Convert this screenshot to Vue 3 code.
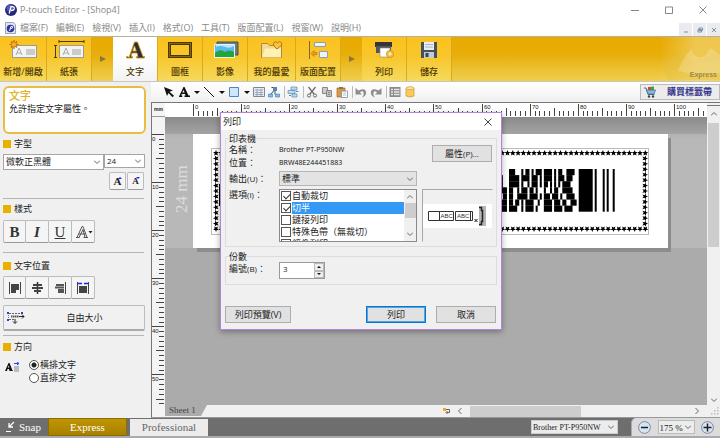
<script setup>
import { ref } from 'vue'

const menus = ['檔案(F)', '編輯(E)', '檢視(V)', '插入(I)', '格式(O)', '工具(T)', '版面配置(L)', '視窗(W)', '說明(H)']

const cutOptions = ref([
  { label: '自動裁切', on: true },
  { label: '切半', on: true, selected: true },
  { label: '鏈接列印', on: false },
  { label: '特殊色帶（無裁切）', on: false },
  { label: '鏡像列印', on: false }
])
const copies = ref(3)
const direction = ref('h')

const UNIT = 4.81
function ticks(count, from) {
  const list = []
  for (let i = from; i <= count; i++) {
    list.push({ pos: Math.round(i * UNIT), size: i % 10 === 0 ? 12 : i % 5 === 0 ? 8 : 5, text: i % 10 === 0 ? String(i) : '' })
  }
  return list
}
const hTicks = ticks(107, 0)
const vTicks = ticks(56, 0)

/* border stars, one unit star repeated around the label */
const stars = []
for (let i = 0; i <= 81; i++) {
  const x = 51 + i * 5.3
  stars.push({ x, y: 36, r: 0 }, { x, y: 112, r: 180 })
}
for (let i = 1; i < 14; i++) {
  const y = 36 + i * 5.43
  stars.push({ x: 51, y, r: 270 }, { x: 480, y, r: 90 })
}

/* PDF417 rows: tail of one codeword, two full codewords, then the stop pattern */
const stop = '111111101000101001'
const rows = [
  '0000' + '11100010110101110' + '11110101100111100',
  '1000' + '11111011110111010' + '11110101110111000',
  '1000' + '11111010010111010' + '11010101011110000',
  '1110' + '11001011101101000' + '10010110011111000',
  '0110' + '11001111101111010' + '11101110100111100',
  '1110' + '11011010111100100' + '11110111011001110',
  '1110' + '11110010111101000' + '11110111101111000'
]
function runs(row) {
  const out = []
  let start = -1
  for (let i = 0; i <= row.length; i++) {
    if (row[i] === '1' && start < 0) start = i
    if (row[i] !== '1' && start >= 0) {
      out.push({ start, n: i - start })
      start = -1
    }
  }
  return out
}
const bars = rows.flatMap((row, y) => runs(row).map((r) => ({ x: 335.8 + r.start * 2.05, y: 52 + y * 6.1, w: r.n * 2.05 })))
const stopBars = runs(stop).map((r) => ({ x: 413.7 + r.start * 2, w: r.n * 2 }))
</script>

<template>
  <div class="app">
    <header class="titlebar">
      <svg class="logo" viewBox="0 0 12 12"><circle cx="6" cy="6" r="6" fill="#26287c" /><circle cx="5" cy="4" r="3.5" fill="#5558b4" /><path d="M4.2 9.5 6 2.7h1.6q2.2.4 1.6 2.3Q8.600 6.700 6 6.500" fill="none" stroke="#fff" stroke-width="1.300" /></svg>
      <h1>P-touch Editor - [Shop4]</h1>
      <div class="winbtns">
        <button aria-label="minimize"><svg viewBox="0 0 8 8"><path d="M0 4.500h8" /></svg></button>
        <button aria-label="maximize"><svg viewBox="0 0 8 8"><path d="M.5 1h7v6.500h-7z" /></svg></button>
        <button aria-label="close"><svg viewBox="0 0 8 8"><path d="M.5.5l7 7M7.500.5l-7 7" /></svg></button>
      </div>
    </header>

    <nav class="menubar">
      <svg class="doc" viewBox="0 0 11 12"><path d="M.5.5h8l2 2v9H.5z" fill="#dfe5ef" stroke="#9aa5b8" /><circle cx="5.500" cy="6.500" r="3.800" fill="#30339a" /><path d="M4.500 9 6 4.300q2.500 0 1.500 1.700l-2 .7" fill="none" stroke="#fff" /></svg>
      <button v-for="m in menus" :key="m">{{ m }}</button>
      <div class="mdi">
        <button aria-label="minimize sheet"><svg viewBox="0 0 6 6"><path d="M1 5h4" /></svg></button>
        <button aria-label="restore sheet"><svg viewBox="0 0 6 6"><path d="M2 1h3.500v2.500H2zM1 2.500h3.500V5H1z" /></svg></button>
        <button aria-label="close sheet"><svg viewBox="0 0 6 6"><path d="M1 1l4 4M5 1L1 5" /></svg></button>
      </div>
    </nav>

    <div class="ribbon">
      <button class="tab">
        <svg viewBox="0 0 32 20"><rect x="5.500" y="5.500" width="24" height="12" fill="#f4f4f2" stroke="#9a9a92" /><path d="M19 9h9v6h-9z" fill="#c9cbcc" /><path d="M9 15l3-7 3 7M10 13h4" fill="none" stroke="#aaa" /><path d="M7 0v9M2.500 4.500h9M4 1.500l6 6M10 1.500l-6 6" stroke="#b46a12" stroke-width="1.200" /><circle cx="7" cy="4.500" r="2.600" fill="#ffae1c" stroke="#b46a12" stroke-width=".6" /></svg>
        新增/開啟
      </button>
      <button class="tab">
        <svg viewBox="0 0 32 20"><rect x="6.500" y="5.500" width="24" height="12" fill="#f4f4f2" stroke="#9a9a92" /><path d="M19 9h9v6h-9z" fill="#c9cbcc" /><path d="M10 15l3-7 3 7M11 13h4" fill="none" stroke="#aaa" /><path d="M6 1.500h25M6 0v3M31 0v3M2.500 5v13M1 5.500h3M1 17.500h3" stroke="#4b3b0c" fill="none" /></svg>
        紙張
      </button>
      <span class="sep"><svg viewBox="0 0 6 6"><path d="M0 0l6 3-6 3z" fill="#8a7440" /></svg></span>
      <button class="tab active">
        <svg viewBox="0 0 32 20"><path d="M10 17.500 15.500 2h3L24 16.500h1.500V18h-8v-1.500h1.500l-1-3.500h-5l-1 3.500h1.500V18h-6v-1.500H9zM13.700 11h3.600l-1.800-5z" fill="#2c2c3c" stroke="#d9a013" stroke-width=".9" fill-rule="evenodd" /></svg>
        文字
      </button>
      <button class="tab">
        <svg viewBox="0 0 32 20"><path d="M5.500 3.500h21v13h-21z" fill="none" stroke="#4a3608" stroke-width="3" /><path d="M5.500 3.500h21v13h-21z" fill="none" stroke="#c8960f" stroke-width="1" stroke-dasharray="1 1" /></svg>
        圖框
      </button>
      <button class="tab">
        <svg viewBox="0 0 32 20"><path d="M8 2h21v13H8z" fill="#707880" stroke="#42505c" /><path d="M5.500 4.500h20v13h-20z" fill="#59b9ea" stroke="#e8f2f5" /><path d="M6 17v-4q5-5 10-1 4-3 9 0v5z" fill="#23a33c" /><path d="M7 7q4-2 9 0t9-1v-1H7z" fill="#b8e6fa" /></svg>
        影像
      </button>
      <button class="tab wide">
        <svg viewBox="0 0 32 20"><path d="M5.500 17.500v-14h6l2 2h12v12z" fill="#f3d98e" stroke="#a98c3e" /><path d="M6 17.500 9 8.500h16v9z" fill="#fff0b4" /><path d="M21 9q-5-4-3-6.500Q20 .5 21.500 3 23.500.5 25.500 2.500 27 5 21 9z" fill="#ffc23b" stroke="#b07810" /></svg>
        我的最愛
      </button>
      <button class="tab">
        <svg viewBox="0 0 32 20"><path d="M7.500 1v18" stroke="#7b6a2a" /><path d="M12.500 2.500h11v4h-11zM17.500 11.500h8v6h-8z" fill="#eef3fa" stroke="#8e9db5" /><path d="M9 13.500 12 10.500v2h3v2h-3v2z" fill="#f19a14" stroke="#ad6608" stroke-width=".5" /></svg>
        版面配置
      </button>
      <span class="sep"><svg viewBox="0 0 6 6"><path d="M0 0l6 3-6 3z" fill="#8a7440" /></svg></span>
      <button class="tab">
        <svg viewBox="0 0 32 20"><path d="M7 2h17v5H7z" fill="#34343a" /><path d="M8 6h15v7H8z" fill="#54545c" /><path d="M12 8h10v9H12z" fill="#fff" stroke="#888" stroke-width=".6" /><circle cx="22" cy="14" r="3.600" fill="#f7bd3c" stroke="#b98416" stroke-width=".6" /><path d="M20.500 14h3M22 12.500v3" stroke="#fff" /></svg>
        列印
      </button>
      <button class="tab">
        <svg viewBox="0 0 32 20"><path d="M8 2h16v16H8z" fill="#46505c" /><path d="M11 2h10v8H11z" fill="#e9eef3" /><path d="M12 4.500h8M12 7h8" stroke="#a8b2bd" /><path d="M11 12h10v6H11z" fill="#c2cad2" /><path d="M12.500 13h3v4h-3z" fill="#39424d" /></svg>
        儲存
      </button>
      <div class="swoosh">
        <svg viewBox="0 0 60 43" preserveAspectRatio="none"><path d="M0 25q15-3 20-12 4 10 18 9 10-2 22-8v28H8z" fill="#e3bd3f" opacity=".35" /><path d="M18 33q8-18 14-21 3 12 14 6l4-7 10 6v18q-20 4-42-2z" fill="#fff" opacity=".2" /></svg>
        <span>Express</span>
      </div>
    </div>

    <div class="main">
      <aside class="side">
        <section class="info">
          <h2>文字</h2>
          <p>允許指定文字屬性。</p>
        </section>

        <section class="grp font">
          <h3>字型</h3>
          <div class="row">
            <span class="combo fam"><select aria-label="字型"><option>微軟正黑體</option></select><svg viewBox="0 0 6 4"><path d="M0 .5l3 3 3-3" /></svg></span>
            <span class="combo size"><select aria-label="字級"><option>24</option></select><svg viewBox="0 0 6 4"><path d="M0 .5l3 3 3-3" /></svg></span>
          </div>
          <div class="row step">
            <button class="sq small" aria-label="放大"><span class="a1">A</span><i class="up"></i></button>
            <button class="sq small" aria-label="縮小"><span class="a2">A</span><i class="dn"></i></button>
          </div>
        </section>

        <section class="grp style">
          <h3>樣式</h3>
          <div class="row">
            <button class="sq"><b>B</b></button>
            <button class="sq"><b class="it">I</b></button>
            <button class="sq"><span class="un">U</span></button>
            <button class="sq" aria-label="外框"><svg viewBox="0 0 20 18"><path d="M4 14.500 9 3.500h1l4 11M6 11h6.500M3 14.500h3.500M10.500 14.500H15M6 14.500l4-8 2 8" fill="none" stroke="#555" /><path d="M15.500 8h4l-2 2.500z" fill="#222" /></svg></button>
          </div>
        </section>

        <section class="grp pos">
          <h3>文字位置</h3>
          <div class="row">
            <button class="sq" aria-label="靠左"><svg viewBox="0 0 20 18"><path d="M4.500 3v12M15.500 3v12" stroke="#444" /><path d="M6 5h8v6h-3v3H6z" fill="#444" /></svg></button>
            <button class="sq" aria-label="置中"><svg viewBox="0 0 20 18"><path d="M10.500 3v12" stroke="#333" stroke-width="1.500" /><path d="M6 5h9v2H6zM5 8h11v2H5zM7 11h7v2H7z" fill="#444" /></svg></button>
            <button class="sq" aria-label="靠右"><svg viewBox="0 0 20 18"><path d="M15.500 3v12" stroke="#444" /><path d="M6 5h8v2H6zM5 7.500h9v2H5zM8 10h6v4H8z" fill="#555" /></svg></button>
            <button class="sq" aria-label="左右對齊"><svg viewBox="0 0 20 18"><path d="M4.500 3v12M15.500 3v12" stroke="#444" /><path d="M6 7h8v7H6z" fill="#444" /><path d="M5 4.500h4M11 4.500h4" stroke="#22f" stroke-width="1.500" /></svg></button>
          </div>
          <button class="free">
            <svg viewBox="0 0 18 14"><path d="M2 2.500h13M2 8.500h5" fill="none" stroke="#666" stroke-dasharray="2 1" /><path d="M1.500 2v7" stroke="#777" stroke-dasharray="1 1" /><path d="M4 5.500h8" stroke="#555" stroke-width="2" stroke-dasharray="1.500 .5" /><path d="M12 5.500h5M15 3.500l2 2-2 2M8 8v4M6 10.500l2 2 2-2" fill="none" stroke="#222" /><path d="M0 1h2v2H0zM0 8h2v2H0zM14 1h2v2h-2z" fill="#2442d8" /></svg>
            <span>自由大小</span>
          </button>
        </section>

        <section class="grp dir">
          <h3>方向</h3>
          <div class="dirrow">
            <svg viewBox="0 0 15 10"><path d="M0 9 3.500 1h1L7.500 8.500H8V9H4.500L4 7H2.500L2 9zM2.800 5.500h1.600L3.700 3.500z" fill="#111" fill-rule="evenodd" /><path d="M9 1.500h5M12 0l2 1.500L12 3" stroke="#24f" fill="none" /><path d="M9 5h5M9 7h5M9 9h5" stroke="#888" /></svg>
            <div>
              <label><input v-model="direction" type="radio" name="dir" value="h" />橫排文字</label>
              <label><input v-model="direction" type="radio" name="dir" value="v" />直排文字</label>
            </div>
          </div>
        </section>
      </aside>

      <div class="work">
        <div class="tools">
          <button aria-label="選取"><svg viewBox="0 0 12 12"><path d="M1 1l9 3.500-3.500 1.300 4.500 4-1.500 1.500-4-4.300L4 10z" fill="#111" /></svg></button>
          <button aria-label="文字"><svg viewBox="0 0 12 12"><path d="M1 10.500 5.500 1h1L10.500 9.500H12V11H6.500V9.500h1L7 8H3.800l-.5 1.500h1V11H1zM4.300 6.500h2.300L5.500 4z" fill="#111" fill-rule="evenodd" /></svg></button>
          <i class="dd"></i>
          <button aria-label="線條"><svg viewBox="0 0 12 12"><path d="M1 1l10 10" stroke="#111" /></svg></button>
          <i class="dd"></i>
          <button aria-label="形狀"><svg viewBox="0 0 12 12"><path d="M1.500 1.500h9v9h-9z" fill="#cfe6fb" stroke="#4b86bd" /></svg></button>
          <i class="dd"></i>
          <button aria-label="表格"><svg viewBox="0 0 12 12"><path d="M.5 1.500h11v9H.5z" fill="#e3e9f2" stroke="#7c8798" /><path d="M2 4h8M2 6.500h8M2 8.500h8M4 3v7M8 3v7" stroke="#8794a8" stroke-width=".7" /></svg></button>
          <button aria-label="排列文字"><svg viewBox="0 0 12 12"><path d="M3.500 1.500h5M6 1v4M6 4.500 3 8M7 4.500v4" stroke="#3a4a66" fill="none" /><path d="M5 1h4v4H5z" fill="#5c83ae" /><path d="M.5 8h4v3h-4zM7.500 8h4v3h-4z" fill="#7fbdf0" stroke="#3c78ac" stroke-width=".6" /></svg></button>
          <i class="vr"></i>
          <button aria-label="資料庫"><svg viewBox="0 0 12 12"><path d="M4 1h6v3H4zM1 4.500h7v3H1zM5 8h5v3H5z" fill="#bcdcf5" stroke="#5d87ae" stroke-width=".7" /><path d="M9 5.500h2.500M2 9.500h2" stroke="#5d87ae" /></svg></button>
          <i class="vr"></i>
          <button aria-label="剪下"><svg viewBox="0 0 12 12"><path d="M2.500 1l5.500 7M9.500 1 4 8" stroke="#6c6c6c" stroke-width="1.300" /><circle cx="3" cy="9.500" r="1.600" fill="none" stroke="#6c6c6c" /><circle cx="9" cy="9.500" r="1.600" fill="none" stroke="#6c6c6c" /></svg></button>
          <button aria-label="複製"><svg viewBox="0 0 12 12"><path d="M1.500 1.500h5v6h-5z" fill="#ccc" stroke="#888" /><path d="M5.500 4.500h5v6h-5z" fill="#c4c4c4" stroke="#888" /><path d="M7 6.500h2M7 8.500h2" stroke="#888" /></svg></button>
          <button aria-label="貼上"><svg viewBox="0 0 12 12"><path d="M1 2h8v9H1z" fill="#dc9a3e" stroke="#94601a" stroke-width=".6" /><path d="M3 1h4v2H3z" fill="#777" /><path d="M5.500 5h6v6.500h-6z" fill="#fff" stroke="#6d7f98" stroke-width=".7" /><path d="M7 7h3M7 9h3" stroke="#7fa3cc" stroke-width=".7" /></svg></button>
          <i class="vr"></i>
          <button aria-label="復原"><svg viewBox="0 0 12 12"><path d="M.5 2v6.500H7L5 6.500q2.500-2.500 3.500 0T7 11.500q5-2 4-6T3.500 4.500z" fill="#8d8d8d" /></svg></button>
          <button aria-label="重做"><svg viewBox="0 0 12 12"><path d="M11.500 2v6.500H5l2-2q-2.500-2.500-3.500 0T5 11.500q-5-2-4-6t7.500-1z" fill="#8d8d8d" /></svg></button>
          <i class="vr"></i>
          <button aria-label="屬性"><svg viewBox="0 0 12 12"><path d="M.5 1h11v10H.5z" fill="#8a8a8a" /><path d="M2 3.500h2M5 3.500h5.500M2 6h2M5 6h5.500M2 8.500h2M5 8.500h5.500" stroke="#e4e4e4" stroke-width="1.300" /></svg></button>
          <button aria-label="連接"><svg viewBox="0 0 12 12"><path d="M2 2v8q4 2 8 0V2z" fill="#fbc95c" stroke="#c18a1c" stroke-width=".6" /><ellipse cx="6" cy="2.200" rx="4" ry="1.500" fill="#ffe8a8" stroke="#c18a1c" stroke-width=".6" /></svg></button>
          <button class="buy">
            <svg viewBox="0 0 12 12"><path d="M4 1h3v3H4z" fill="#e33c2c" /><path d="M7 .5h3V4H7z" fill="#3bab3b" /><path d="M0 2h2l2 6.500h6.500" fill="none" stroke="#55687c" /><path d="M2.500 4h9L10 8H4z" fill="#86b8dd" stroke="#3f6f98" stroke-width=".7" /><circle cx="5" cy="10.500" r="1.200" fill="#444" /><circle cx="9" cy="10.500" r="1.200" fill="#444" /></svg>
            購買標籤帶
          </button>
        </div>

        <div class="stage">
          <div class="corner">mm</div>
          <div class="hruler">
            <svg>
              <g v-for="t in hTicks" :key="t.pos">
                <rect :x="t.pos + 28" :y="13 - t.size" width="1" :height="t.size" />
                <text v-if="t.text" :x="t.pos + 30" y="6">{{ t.text }}</text>
              </g>
            </svg>
          </div>
          <div class="vruler">
            <svg>
              <g v-for="t in vTicks" :key="t.pos">
                <rect :x="12 - t.size" :y="t.pos + 17" :width="t.size" height="1" />
                <text v-if="t.text" x="0" :y="t.pos + 24">{{ t.text }}</text>
              </g>
            </svg>
          </div>
          <div class="canvas">
            <svg>
              <defs>
                <polygon id="star" points="0,-3 .8,-1 2.900,-.9 1.300,.5 1.900,2.600 0,1.400 -1.900,2.600 -1.300,.5 -2.900,-.9 -.8,-1" />
              </defs>
              <rect x="0" y="17" width="100%" height="114" fill="#fff" opacity=".16" />
              <rect x="32" y="21" width="474" height="114" fill="#8d8d8d" />
              <rect x="28" y="17" width="475" height="114" fill="#fff" />
              <rect x="46.500" y="31.500" width="437" height="86" fill="none" stroke="#bbb" />
              <use v-for="(s, i) in stars" :key="i" href="#star" :transform="`translate(${s.x} ${s.y}) rotate(${s.r})`" />
              <rect v-for="(b, i) in bars" :key="'b' + i" :x="b.x" :y="b.y" :width="b.w" height="6.200" />
              <rect v-for="(b, i) in stopBars" :key="'s' + i" :x="b.x" y="52" :width="b.w" height="42.700" />
              <rect x="54" y="67" width="8" height="22" />
              <text class="tape" transform="translate(22 96) rotate(-90)">24 mm</text>
            </svg>
          </div>
          <div class="vscroll"><svg viewBox="0 0 6 4"><path d="M0 3.500l3-3 3 3" /></svg><i></i><svg viewBox="0 0 6 4"><path d="M0 .5l3 3 3-3" /></svg></div>
          <div class="sheetrow">
            <button class="sheet">Sheet 1</button>
            <div class="hscroll">
              <svg class="mark" viewBox="0 0 7 6"><path d="M2.500 1.500h4v3h-3M4.500 3l-1.500 1.500L4.500 6" fill="none" stroke="#888" /><path class="dot" d="M0 0h3v3H0z" /></svg>
              <svg viewBox="0 0 4 6"><path d="M3.500 0l-3 3 3 3" /></svg><i></i><b></b><svg viewBox="0 0 4 6"><path d="M.5 0l3 3-3 3" /></svg>
            </div>
          </div>
          <div class="grip"><svg viewBox="0 0 8 8"><path d="M6 0h1.500v1.500H6zM6 3h1.500v1.500H6zM3 3h1.500v1.500H3zM6 6h1.500v1.500H6zM3 6h1.500v1.500H3zM0 6h1.500v1.500H0z" /></svg></div>
        </div>
      </div>
    </div>

    <footer class="status">
      <button class="snap"><svg viewBox="0 0 9 12"><path d="M8 1 3.500 5.500M3 2v4h4" fill="none" stroke="#fff" stroke-width="1.300" /><path d="M0 10.500h5" stroke="#fff" /></svg>Snap</button>
      <button class="express">Express</button>
      <button class="pro">Professional</button>
      <span class="combo dev"><select aria-label="印表機"><option>Brother PT-P950NW</option></select><svg viewBox="0 0 6 4"><path d="M0 .5l3 3 3-3" /></svg></span>
      <div class="zoom">
        <button aria-label="縮小顯示"><svg viewBox="0 0 13 13"><circle cx="6.500" cy="6.500" r="5.900" fill="#d6e4f2" stroke="#7b8ba0" /><path d="M3 6.500h7" stroke="#222" stroke-width="1.500" /></svg></button>
        <span class="combo pct"><select aria-label="顯示比例"><option>175 %</option></select><svg viewBox="0 0 6 4"><path d="M0 .5l3 3 3-3" /></svg></span>
        <button aria-label="放大顯示"><svg viewBox="0 0 13 13"><circle cx="6.500" cy="6.500" r="5.900" fill="#d6e4f2" stroke="#7b8ba0" /><path d="M2.500 6.500h8M6.500 2.500v8" stroke="#222" stroke-width="1.500" /></svg></button>
      </div>
    </footer>

    <div class="dialog" role="dialog" aria-label="列印">
      <div class="dtitle">列印<button aria-label="close dialog"><svg viewBox="0 0 8 8"><path d="M.5.5l7 7M7.500.5l-7 7" /></svg></button></div>
      <div class="dbody">
        <fieldset class="printer">
          <legend>印表機</legend>
          <div class="facts">
            <dl>
              <dt>名稱：</dt><dd>Brother PT-P950NW</dd>
              <dt>位置：</dt><dd>BRW48E244451883</dd>
            </dl>
            <button class="btn">屬性<small>(P)...</small></button>
          </div>
          <div class="field">
            <label for="out">輸出<small>(U)</small>：</label>
            <span class="combo out"><select id="out"><option>標準</option></select><svg viewBox="0 0 6 4"><path d="M0 .5l3 3 3-3" /></svg></span>
          </div>
          <div class="field opts">
            <span class="lab">選項<small>(I)</small>：</span>
            <div class="list">
              <div class="items">
                <label v-for="o in cutOptions" :key="o.label"><input v-model="o.on" type="checkbox" /><span :class="{ sel: o.selected }">{{ o.label }}</span></label>
              </div>
              <div class="lscroll"><svg viewBox="0 0 6 4"><path d="M0 3.500l3-3 3 3" /></svg><i></i><svg viewBox="0 0 6 4"><path d="M0 .5l3 3 3-3" /></svg></div>
            </div>
            <div class="preview">
              <svg viewBox="0 0 69 24">
                <rect width="69" height="24" fill="#fff" />
                <path d="M5.500 7.500h25v9h-25zM16.500 7.500v9M32.500 7.500h17v9h-17zM47.500 7.500v9" fill="none" stroke="#333" />
                <text x="17.500" y="14">ABC</text><text x="34" y="14">ABC</text>
                <path d="M51.500 15l3 3M54.500 15l-3 3" stroke="#111" />
                <path d="M56 2h7v20h-7z" fill="#b5b5b5" /><path d="M56 3.500h2.500v3h1v11h-1v3H56" fill="none" stroke="#222" stroke-width="1.500" />
              </svg>
            </div>
          </div>
        </fieldset>
        <fieldset class="count">
          <legend>份數</legend>
          <div class="field">
            <label for="num">編號<small>(B)</small>：</label>
            <span class="spin">
              <input id="num" v-model="copies" type="text" />
              <span><button aria-label="增加" @click="copies++"><i class="t"></i></button><button aria-label="減少" @click="copies--"><i class="b"></i></button></span>
            </span>
          </div>
        </fieldset>
        <div class="actions">
          <button class="btn pv">列印預覽(V)</button>
          <button class="btn ok">列印</button>
          <button class="btn">取消</button>
        </div>
      </div>
    </div>
  </div>
</template>

<style>
body { margin: 0; overflow: hidden; }
</style>

<style scoped>
.app { position: relative; display: flex; flex-direction: column; height: 100vh; overflow: hidden; background: #fff; color: #222; font: 9px/12px "Open Sans", "Noto Sans CJK TC", sans-serif; }
.app *, .app { box-sizing: border-box; }
button, select, input { font: inherit; color: inherit; margin: 0; padding: 0; border: 0; background: none; border-radius: 0; }
h1, h2, h3, p, dl, dd { margin: 0; font-weight: 400; }
svg { display: block; flex: none; }
i { font-style: normal; }

.titlebar { display: flex; align-items: center; height: 20px; padding-left: 5px; gap: 3px; color: #888; }
.titlebar h1 { font-size: 9px; flex: 1; }
.logo { width: 12px; height: 12px; }
.winbtns { display: flex; gap: 18px; padding-right: 9px; }
.winbtns button, .winbtns svg { width: 8px; height: 8px; }
.winbtns button { width: 16px; display: flex; justify-content: center; }
.winbtns path { fill: none; stroke: #888; }

.menubar { display: flex; align-items: center; gap: 8px; height: 16px; padding-left: 5px; color: #888; white-space: nowrap; }
.doc { width: 11px; height: 12px; margin-right: -4px; }
.mdi { display: flex; gap: 1px; margin-left: auto; align-self: flex-end; }
.mdi button { width: 13px; height: 13px; padding: 4px; background: #e9ebee; }
.mdi svg { width: 6px; height: 6px; }
.mdi path { stroke: #8092a8; fill: none; }

.ribbon { display: flex; flex: none; height: 46px; border-top: 1px solid #b9b09a; border-bottom: 1px solid #c8c6c0; background: linear-gradient(#e9a900, #e8ae0a 40%, #efcf50); }
.tab { width: 45px; display: flex; flex-direction: column; align-items: center; gap: 6px; padding-top: 3px; font-weight: 500; color: #4d3600; white-space: nowrap; background: linear-gradient(#fbc21d, #f8c62c 45%, #f5da5e); border-right: 1px solid #dca91c; }
.tab:first-child { width: 47px; }
.tab.wide { width: 48px; }
.tab svg { width: 32px; height: 20px; }
.tab.active { background: linear-gradient(#fff, #fff 40%, #f2f2f2); }
.sep { width: 21px; display: flex; align-items: center; justify-content: center; }
.sep svg { width: 6px; height: 6px; }
.swoosh { position: relative; display: flex; justify-content: flex-end; align-items: flex-end; width: 60px; margin-left: auto; padding: 0 3px 1px 0; color: #a08a48; font-size: 7px; line-height: 10px; font-weight: 600; font-family: "Liberation Sans", sans-serif; background: linear-gradient(90deg, transparent, #f3d98099 60%); }
.swoosh svg { position: absolute; inset: 0; width: 100%; height: 100%; }
.swoosh span { position: relative; }

.main { display: grid; grid-template-columns: 151px 1fr; flex: 1; min-height: 0; background: #f0f0f0; }
.side { padding: 4px 5px 0 3px; }
.info { height: 48px; border: 2px solid #e8be42; border-radius: 6px; background: #fff; padding: 1px 4px; }
.info h2 { font-size: 11px; line-height: 14px; color: #e5b022; font-weight: 500; }
.info p { line-height: 12px; }
.grp { border-bottom: 1px solid #b5b5b5; margin-right: 2px; }
.grp.dir { border: 0; }
.grp h3 { display: flex; align-items: center; gap: 3px; line-height: 12px; padding-top: 4px; font-size: 9px; }
.grp h3::before { content: ""; width: 8px; height: 8px; background: #e8b000; }
.grp .row { display: flex; margin-top: 4px; }
.font { height: 65px; }
.style { height: 54px; }
.pos { height: 83px; padding-top: 3px; }
.style .row { margin-top: 5px; }
.dir { padding-top: 1px; }
.combo { position: relative; display: flex; border: 1px solid #a5a5a5; background: #fff; }
.combo select { appearance: none; width: 100%; padding: 0 12px 0 2px; }
.combo svg { position: absolute; right: 3px; top: 50%; margin-top: -2px; width: 6px; height: 4px; pointer-events: none; }
.combo path, .vscroll path, .hscroll path, .lscroll path { fill: none; stroke: #666; }
.hscroll .dot { fill: #f5a623; stroke: none; }
.fam { width: 101px; height: 16px; flex: none; }
.size { width: 41px; height: 14px; flex: none; font-size: 8px; }
.font .step { justify-content: flex-end; gap: 1px; margin-top: 2px; }
.sq { position: relative; display: flex; align-items: center; justify-content: center; width: 23px; height: 23px; border: 1px solid #bcbcbc; border-bottom-color: #999; border-radius: 2px; background: #f5f5f5; font: 15px/18px "Liberation Serif", serif; color: #333; }
.sq + .sq { margin-left: -1px; width: 24px; }
.sq svg { width: 20px; height: 18px; }
.sq.small, .sq.small + .sq.small { width: 17px; height: 18px; margin: 0; font-weight: 700; color: #222; }
.a1 { font-size: 11px; }
.a2 { font-size: 9px; }
.small i { position: absolute; top: 4px; right: 3px; border: 2px solid transparent; }
.small .up { border-bottom-color: #22f; border-top: 0; }
.small .dn { border-top-color: #22f; border-bottom: 0; }
.it { font-style: italic; }
.un { text-decoration: underline; }
.free { display: flex; align-items: center; width: 142px; height: 26px; margin-top: 6px; padding-left: 3px; border: 1px solid #bcbcbc; border-bottom: 2px solid #aaa; border-radius: 2px; background: #f1f1f1; }
.free svg { width: 18px; height: 14px; }
.free span { flex: 1; }
.dirrow { display: flex; align-items: flex-start; gap: 9px; padding: 5px 0 0 2px; }
.dirrow svg { width: 15px; height: 10px; margin-top: 4px; }
.dirrow label { display: flex; align-items: center; gap: 1px; height: 13px; }
.dirrow input { appearance: none; width: 10px; height: 10px; border: 1px solid #555; border-radius: 50%; background: #fff; }
.dirrow input:checked { background: radial-gradient(#222 0 2px, #fff 3px); }

.work { display: flex; flex-direction: column; min-width: 0; }
.tools { display: flex; align-items: center; flex: none; height: 20px; padding-left: 12px; gap: 3px; background: linear-gradient(#fff, #f0f0f0); }
.tools button { flex: none; }
.tools svg { width: 12px; height: 12px; }
.dd { border: 3px solid transparent; border-top-color: #111; border-bottom: 0; width: 6px; margin-left: 1px; }
.vr { width: 1px; height: 12px; margin: 0 -1px 0 1px; background: #bbb; }
.tools .buy { display: flex; align-items: center; gap: 11px; width: 80px; height: 16px; margin-left: auto; padding-left: 3px; border: 1px solid #bbb; background: #ececec; color: #34348c; font-weight: 700; }
.stage { flex: 1; min-height: 0; display: grid; grid-template: 14px 1fr 12px / 13px 1fr 13px; border-left: 1px solid #777; border-top: 1px solid #777; border-bottom: 1px solid #999; }
.corner { font: 700 5px/12px "Liberation Sans", sans-serif; text-align: center; border-bottom: 1px solid #999; background: #f4f4f4; }
.hruler, .vruler, .canvas { position: relative; overflow: hidden; background: #f4f4f4; }
.hruler { background: #fff; }
.hruler svg, .vruler svg, .canvas svg { position: absolute; inset: 0; width: 100%; height: 100%; }
.hruler text, .vruler text { font: 6px "Liberation Sans", sans-serif; fill: #222; }
.hruler rect, .vruler rect { fill: #444; }
.vruler { grid-row: 2 / 4; grid-column: 1; }
.canvas { grid-row: 2; grid-column: 2; background: linear-gradient(#8a8a8a, #ababab 22px, #ababab); }
.tape { font: 17px "Liberation Serif", serif; fill: #dcdcdc; }
.vscroll { grid-row: 1 / 3; grid-column: 3; display: flex; flex-direction: column; align-items: center; margin-top: 2px; padding: 6px 0 3px; border-top: 1px solid #777; }
.vscroll svg { width: 6px; height: 4px; }
.vscroll i { width: 11px; height: 124px; margin: 7px 0 auto; background: #cdcdcd; }
.sheetrow { grid-column: 2; display: flex; justify-content: space-between; align-items: flex-start; min-width: 0; }
.sheet { width: 42px; height: 11px; padding-left: 4px; text-align: left; font: 9px/11px "Liberation Serif", serif; color: #444; background: #ababab; clip-path: polygon(0 0, 42px 0, 36px 100%, 0 100%); }
.hscroll { display: flex; align-items: center; gap: 8px; width: 49%; height: 12px; padding: 0 8px 0 2px; }
.hscroll svg { width: 4px; height: 6px; }
.hscroll .mark { width: 7px; }
.hscroll i { flex: 116; height: 11px; background: #cdcdcd; }
.hscroll b { flex: 102; }
.grip svg { width: 8px; height: 8px; margin: 2px 0 0 4px; fill: #bbb; }

.status { display: flex; flex: none; align-items: center; height: 20px; border-bottom: 2px solid #aaa; background: #6e6e6e; font: 11px/14px "Liberation Serif", serif; }
.snap { display: flex; align-items: center; gap: 4px; width: 48px; padding-left: 6px; color: #fff; }
.snap svg { width: 9px; height: 12px; }
.express { width: 79px; height: 18px; color: #fff; background: linear-gradient(#c09600, #a88000); border: 1px solid #8c6c08; }
.pro { width: 78px; height: 17px; margin-left: 3px; color: #666; background: #ececec; }
.dev { width: 87px; height: 14px; margin: 0 13px 0 auto; border-color: #ccc; background: #ececec; font-size: 8px; }
.status .dev select, .status .pct select { padding: 0 9px 0 1px; }
.zoom { display: flex; align-items: center; justify-content: space-between; width: 89px; height: 100%; padding: 0 6px; background: #dcdcdc; border-left: 1px solid #aaa; border-radius: 5px 0 0 0; }
.zoom button svg { width: 13px; height: 13px; }
.pct { width: 37px; height: 14px; border-color: #bbb; background: #ececec; font-size: 9px; }

.dialog { position: absolute; left: 220px; top: 112px; width: 282px; height: 218px; display: flex; flex-direction: column; border: 1px solid #b583dc; background: #f0f0f0; box-shadow: 0 2px 6px #0005; }
.dtitle { display: flex; align-items: center; justify-content: space-between; height: 17px; padding: 0 9px 0 2px; background: #fff; }
.dtitle svg { width: 8px; height: 8px; }
.dtitle path { stroke: #444; }
.dbody { display: flex; flex-direction: column; flex: 1; padding: 2px 4px 0; }
fieldset { position: relative; margin: 0; padding: 0; min-width: 0; border: 1px solid #dcdcdc; }
legend { float: left; line-height: 12px; margin: -6px 0 -2px; padding: 0; background: #f0f0f0; }
.printer { margin-top: 6px; height: 109px; padding: 0 4px 0 3px; }
.facts { clear: both; display: flex; justify-content: space-between; align-items: flex-start; }
dl { display: grid; grid-template-columns: 50px auto; line-height: 13px; }
dt, dd { white-space: nowrap; }
dd { font-size: 7px; font-family: "Noto Sans", sans-serif; }
small { font-size: 8px; }
.btn { width: 60px; height: 17px; border: 1px solid #adadad; background: #e1e1e1; }
.facts .btn { margin-top: 2px; }
.field { display: flex; align-items: flex-start; }
.field > label, .lab { width: 50px; flex: none; white-space: nowrap; }
.printer .field { margin-top: 2px; align-items: center; }
.printer .opts { align-items: flex-start; margin-top: 3px; }
.out { width: 138px; height: 15px; background: #e3e3e3; border-color: #b5b5b5; }
.list { display: flex; width: 138px; height: 53px; flex: none; border: 1px solid #8a8a8a; background: #fff; overflow: hidden; }
.items { flex: 1; padding: 0 0 0 1px; min-width: 0; overflow: hidden; }
.items label { display: flex; align-items: center; gap: 1px; height: 12px; }
.items span { flex: 1; white-space: nowrap; height: 12px; }
.items .sel { background: #3399f5; color: #fff; }
.items input { appearance: none; position: relative; width: 10px; height: 10px; flex: none; border: 1px solid #555; background: #fff; }
.items input:checked::after { content: ""; position: absolute; left: 3px; top: 0; width: 3px; height: 6px; border: solid #333; border-width: 0 1px 1px 0; transform: rotate(45deg); }
.lscroll { width: 12px; display: flex; flex-direction: column; align-items: center; justify-content: space-between; padding: 5px 0; background: #f0f0f0; }
.lscroll svg { width: 6px; height: 4px; }
.lscroll i { width: 11px; height: 15px; margin: 4px 0 auto; background: #cdcdcd; }
.preview { width: 71px; height: 53px; margin-left: 5px; display: flex; align-items: center; border: 1px solid #a8a8a8; border-right-color: #eee; border-bottom-color: #eee; }
.preview svg { width: 69px; height: 24px; }
.preview text { font: 6px "Liberation Sans", sans-serif; fill: #333; }
.count { margin-top: 9px; height: 29px; padding: 0 3px; }
.count .field { clear: both; padding-top: 1px; }
.count .field label { padding-top: 1px; }
.spin { display: flex; width: 46px; height: 17px; border: 1px solid #999; }
.spin input { width: 34px; padding: 0 0 3px 3px; background: #fff; font-size: 8px; }
.spin > span { display: flex; flex-direction: column; flex: 1; }
.spin button { flex: 1; display: flex; align-items: center; justify-content: center; border: 1px solid #bbb; background: #eee; }
.spin i { border: 2px solid transparent; }
.spin .t { border-bottom-color: #111; border-top: 0; }
.spin .b { border-top-color: #111; border-bottom: 0; }
.actions { display: flex; gap: 10px; margin-top: 21px; padding-right: 1px; }
.btn.pv { width: 66px; margin-right: auto; }
.btn.ok { border: 1px solid #0078d7; outline: 1px solid #0078d799; outline-offset: -2px; }
</style>
